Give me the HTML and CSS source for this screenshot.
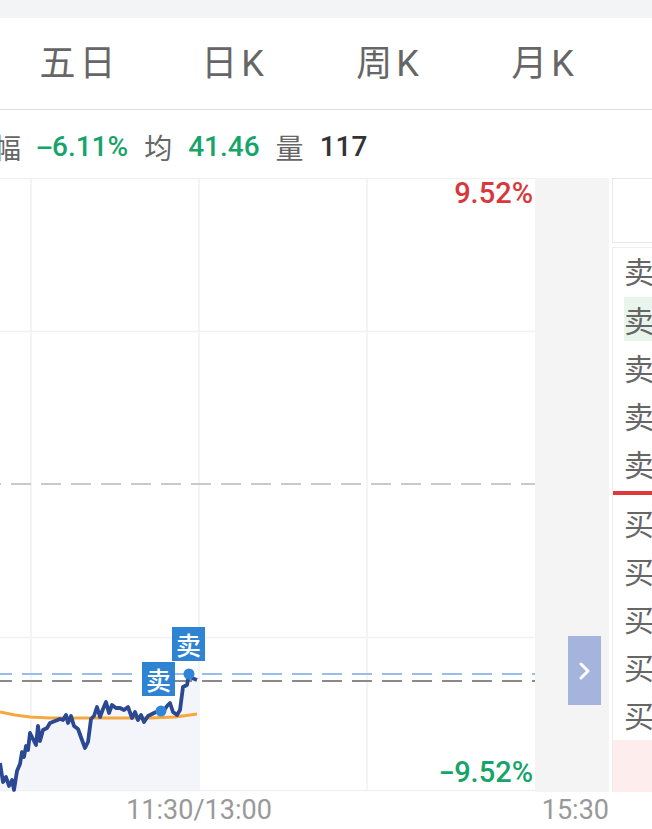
FILE: index.html
```html
<!DOCTYPE html>
<html lang="zh-CN">
<head>
<meta charset="utf-8">
<title>分时</title>
<link rel="stylesheet" href="styles.css">
</head>
<body>
<div class="topstrip"></div>
<nav class="tabs">
  <div class="tab">五日</div>
  <div class="tab">日K</div>
  <div class="tab">周K</div>
  <div class="tab">月K</div>
</nav>
<div class="info">
  <span class="lbl first">幅</span>
  <span class="num green"><span class="minus">-</span>6.11%</span>
  <span class="lbl">均</span>
  <span class="num green">41.46</span>
  <span class="lbl">量</span>
  <span class="num dark">117</span>
</div>
<div class="main">
  <div class="chart">
    <svg class="plot" width="535" height="614" viewBox="0 0 535 614">
      <g class="grid">
        <line x1="31" y1="0" x2="31" y2="613"/>
        <line x1="199" y1="0" x2="199" y2="613"/>
        <line x1="367" y1="0" x2="367" y2="613"/>
        <line x1="0" y1="0.5" x2="535" y2="0.5"/>
        <line x1="0" y1="153.5" x2="535" y2="153.5"/>
        <line x1="0" y1="459.5" x2="535" y2="459.5"/>
        <line x1="0" y1="612.5" x2="535" y2="612.5"/>
      </g>
      <line class="mid" x1="-19" y1="306" x2="535" y2="306"/>
      <polygon class="area" points="0,585 3,604 6,599 9,608 12,602 14,612 17,593 20,586 22,574 24,579 26,568 28,572 30,555 32,559 34,563 36,567 38,548 40,563 43,552 47,550 50,545 55,543 60,541 63,542 66,537 68,545 71,538 74,548 78,551 82,562 85,570 88,564 91,541 94,538 97,529 100,539 103,531 106,524 109,535 112,527 116,530 120,530 124,532 128,529 132,540 135,534 138,542 141,537 144,544 148,538 152,536 156,534 161,533 165,531 167,528 170,525 173,534 177,537 180,532 183,509 187,507 189,496 192,500 197,502 199,504 199,612 0,612"/>
      <line class="ref-blue" x1="-8" y1="496" x2="535" y2="496"/>
      <line class="ref-gray" x1="-8" y1="503" x2="535" y2="503"/>
      <polyline class="avg" points="0,534 15,537 30,539 50,540 100,540 150,540 175,539 190,537 197,536"/>
      <polyline class="price" points="0,585 3,604 6,599 9,608 12,602 14,612 17,593 20,586 22,574 24,579 26,568 28,572 30,555 32,559 34,563 36,567 38,548 40,563 43,552 47,550 50,545 55,543 60,541 63,542 66,537 68,545 71,538 74,548 78,551 82,562 85,570 88,564 91,541 94,538 97,529 100,539 103,531 106,524 109,535 112,527 116,530 120,530 124,532 128,529 132,540 135,534 138,542 141,537 144,544 148,538 152,536 156,534 161,533 165,531 167,528 170,525 173,534 177,537 180,532 183,509 187,507 189,496 192,500 197,502"/>
      <circle class="dot" cx="161" cy="533" r="5.5"/>
      <circle class="dot" cx="189" cy="496" r="5.5"/>
    </svg>
    <span class="limit up">9.52%</span>
    <span class="limit down"><span class="minus">-</span>9.52%</span>
    <span class="mark m-low">卖</span>
    <span class="mark m-high">卖</span>
  </div>
  <div class="side">
    <button class="expand" type="button" aria-label="展开">
      <svg width="11" height="18" viewBox="0 0 11 18"><polyline points="2,2 9,9 2,16"/></svg>
    </button>
  </div>
  <div class="book">
    <div class="book-head"></div>
    <div class="book-list">
      <div class="row">卖</div>
      <div class="row hl">卖</div>
      <div class="row">卖</div>
      <div class="row">卖</div>
      <div class="row">卖</div>
      <div class="sep"></div>
      <div class="row">买</div>
      <div class="row">买</div>
      <div class="row">买</div>
      <div class="row">买</div>
      <div class="row">买</div>
      <div class="pink"></div>
    </div>
  </div>
</div>
<div class="axis">
  <span class="t-mid">11:30/13:00</span>
  <span class="t-end">15:30</span>
</div>
</body>
</html>
```

FILE: styles.css
```css
* { box-sizing: border-box; }
html, body {
  margin: 0;
  padding: 0;
  background: #fff;
}
body {
  width: 652px;
  height: 829px;
  overflow: hidden;
  font-family: Roboto, "Noto Sans CJK SC", sans-serif;
}
.topstrip {
  height: 18px;
  background: #f3f4f6;
}
.tabs {
  display: flex;
  height: 92px;
  border-bottom: 1px solid #dedede;
}
.tab {
  flex: none;
  width: 155px;
  display: flex;
  align-items: center;
  justify-content: center;
  font-size: 36px;
  line-height: 1;
  letter-spacing: 4px;
  text-indent: 4px;
  color: #666;
  padding-top: 1px;
}
.info {
  display: flex;
  align-items: center;
  gap: 16px;
  height: 68px;
  padding-top: 5px;
  font-size: 28px;
  line-height: 1;
  white-space: nowrap;
}
.info .first { margin-left: -7px; }
.lbl { color: #666; font-family: "Noto Sans CJK SC", sans-serif; }
.num { font-weight: 500; }
.green { color: #17a46a; }
.dark { color: #333; }
.minus {
  display: inline-block;
  width: 15px;
  text-align: center;
  transform: scaleX(1.9);
}
.main {
  display: flex;
  height: 614px;
  overflow: hidden;
}
.chart {
  position: relative;
  flex: none;
  width: 535px;
  height: 614px;
}
.plot { display: block; }
.grid line { stroke: #f1f1f1; stroke-width: 1.5; }
.mid { stroke: #c9c9c9; stroke-width: 2; stroke-dasharray: 20 10; }
.ref-blue { stroke: #97bde8; stroke-width: 2; stroke-dasharray: 20 10; }
.ref-gray { stroke: #8a8a8a; stroke-width: 2; stroke-dasharray: 20 10; }
.area { fill: #f3f5fb; }
.avg { fill: none; stroke: #f4a83e; stroke-width: 3; stroke-linejoin: round; }
.price { fill: none; stroke: #2b4893; stroke-width: 3.8; stroke-linejoin: round; }
.dot { fill: #2f86d6; }
.limit {
  position: absolute;
  right: 2px;
  font-size: 29px;
  line-height: 28px;
  font-weight: 500;
  white-space: nowrap;
}
.limit.up { top: 1px; color: #d8383b; }
.limit.down { top: 580px; color: #17a46a; }
.limit .minus { width: 14px; transform: scaleX(1.6); }
.mark {
  position: absolute;
  width: 33px;
  height: 34px;
  background: #2e83d3;
  color: #fff;
  font-family: "Noto Sans CJK SC", sans-serif;
  font-size: 25px;
  line-height: 34px;
  text-align: center;
  font-weight: 500;
}
.m-low { left: 142px; top: 484px; }
.m-high { left: 172px; top: 449px; }
.side {
  flex: none;
  width: 74px;
  height: 614px;
  background: #f4f4f4;
  display: flex;
  flex-direction: column;
}
.expand {
  margin: 458px 0 0 33px;
  width: 33px;
  height: 69px;
  padding: 0;
  border: 0;
  background: #a4b4dc;
  display: flex;
  align-items: center;
  justify-content: center;
}
.expand svg polyline {
  fill: none;
  stroke: #fff;
  stroke-width: 3;
  stroke-linecap: round;
  stroke-linejoin: round;
}
.book {
  flex: none;
  width: 120px;
  margin-left: 3px;
  display: flex;
  flex-direction: column;
}
.book-head {
  height: 65px;
  border: 1px solid #e8e8e8;
  background: #fff;
}
.book-list {
  margin-top: 4px;
  border-left: 1px solid #eeeeee;
  border-top: 1px solid #eeeeee;
  flex: 1;
}
.row {
  height: 48px;
  line-height: 48px;
  padding-left: 11px;
  font-family: "Noto Sans CJK SC", sans-serif;
  font-size: 30px;
  color: #666;
}
.row.hl {
  background: #e8f5ec;
  background-clip: content-box;
  padding-top: 2px;
  padding-bottom: 2px;
  line-height: 44px;
}
.book-list .row:first-child { height: 47px; line-height: 45px; }
.sep {
  height: 4px;
  margin: 4px 0 3px;
  background: #e0393d;
}
.pink {
  height: 52px;
  margin-top: 2px;
  background: #fdeded;
}
.axis {
  display: flex;
  height: 37px;
  padding-top: 5px;
  font-size: 27px;
  line-height: 27px;
  color: #999;
  white-space: nowrap;
}
.t-mid { flex: none; width: 398px; text-align: center; }
.t-end { flex: none; width: 211px; text-align: right; }
```
